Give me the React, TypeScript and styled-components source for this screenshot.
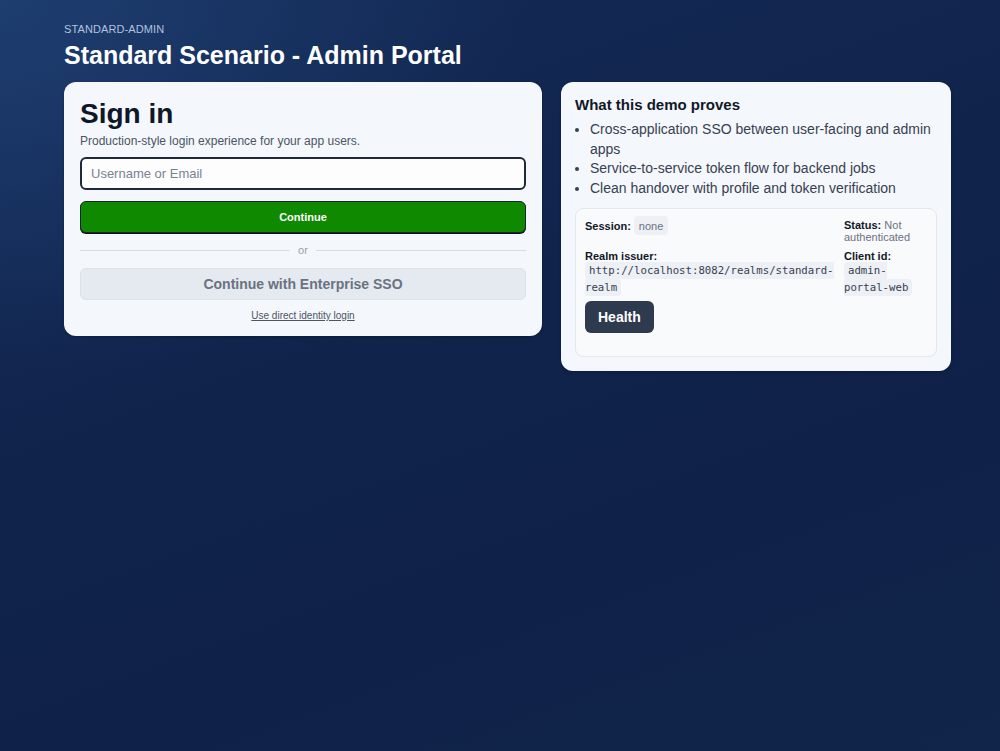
import React from "react";
import styled, { createGlobalStyle } from "styled-components";

const GlobalStyle = createGlobalStyle`
  html, body, #root { height: 100%; }
  body {
    margin: 0;
    font-family: "Liberation Sans", Arial, sans-serif;
    background: #0f2148;
  }
  * { box-sizing: border-box; }
`;

const Page = styled.div`
  min-height: 100vh;
  padding: 23px 49px 0 64px;
  background:
    radial-gradient(ellipse 520px 380px at 0% 0%, rgba(32, 66, 118, 0.8) 0%, rgba(32, 66, 118, 0) 100%),
    linear-gradient(160deg, #142b57 0%, #10234b 45%, #0f2148 70%, #112449 100%);
`;

const Eyebrow = styled.div`
  font-size: 11px;
  line-height: 13px;
  color: #b3c2de;
  letter-spacing: 0.1px;
`;

const Title = styled.h1`
  margin: 5px 0 12px;
  font-size: 25px;
  line-height: 29px;
  font-weight: 700;
  color: #ffffff;
`;

const Columns = styled.div`
  display: grid;
  grid-template-columns: 478px 390px;
  column-gap: 19px;
  align-items: start;
`;

const Card = styled.section<{ $pad: string }>`
  background: #f4f7fb;
  border-radius: 12px;
  padding: ${(p) => p.$pad};
  box-shadow: 0 1px 3px rgba(0, 0, 0, 0.25);
`;

const SignInTitle = styled.h2`
  margin: 0;
  font-size: 28px;
  line-height: 32px;
  font-weight: 700;
  color: #0f172a;
`;

const Subtitle = styled.p`
  margin: 4px 0 9px;
  font-size: 12px;
  line-height: 14px;
  color: #4b5563;
`;

const Form = styled.div`
  display: flex;
  flex-direction: column;
  gap: 11px;
`;

const TextInput = styled.input`
  height: 33px;
  width: 100%;
  border: 2px solid #1f2937;
  border-radius: 6px;
  background: #fdfdfe;
  padding: 0 9px;
  font-family: "Liberation Sans", Arial, sans-serif;
  font-size: 13px;
  color: #111827;
  outline: none;
  &::placeholder { color: #7b8290; }
`;

const PrimaryButton = styled.button`
  height: 32px;
  width: 100%;
  border: 1px solid #1b2430;
  border-radius: 6px;
  background: #0e8900;
  box-shadow: 0 1px 0 #111;
  color: #ffffff;
  font-family: "Liberation Sans", Arial, sans-serif;
  font-size: 11px;
  font-weight: 700;
  cursor: pointer;
`;

const Divider = styled.div`
  display: flex;
  align-items: center;
  gap: 8px;
  font-size: 11px;
  line-height: 13px;
  color: #9aa1ad;
  &::before, &::after {
    content: "";
    flex: 1;
    height: 1px;
    background: #d8dde5;
  }
`;

const SecondaryButton = styled.button`
  height: 32px;
  width: 100%;
  border: 1px solid #dce1e9;
  border-radius: 6px;
  background: #e5e9f0;
  color: #6b7280;
  font-family: "Liberation Sans", Arial, sans-serif;
  font-size: 14px;
  font-weight: 700;
  cursor: pointer;
`;

const LinkRow = styled.div`
  text-align: center;
  font-size: 10px;
  line-height: 12px;
  margin-top: -1px;
`;

const TextLink = styled.a`
  font-size: 10px;
  line-height: 12px;
  color: #4b5563;
  text-decoration: underline;
  cursor: pointer;
`;

const SideTitle = styled.h3`
  margin: 0;
  font-size: 15px;
  line-height: 17px;
  font-weight: 700;
  color: #111827;
`;

const List = styled.ul`
  margin: 7px 0 10px;
  padding-left: 15px;
  font-size: 14px;
  line-height: 19.6px;
  color: #374151;
`;

const InfoBox = styled.div`
  background: #f9fafc;
  border: 1px solid #e4e8ee;
  border-radius: 8px;
  padding: 7px 9px 23px;
`;

const InfoGrid = styled.div`
  display: grid;
  grid-template-columns: 253px 82px;
  column-gap: 6px;
  row-gap: 7px;
  margin-bottom: 5px;
`;

const InfoCell = styled.div<{ $offset?: number }>`
  padding-top: ${(p) => p.$offset ?? 0}px;
  font-size: 11px;
  line-height: 12px;
  color: #6b7280;
`;

const Label = styled.strong<{ $block?: boolean }>`
  display: ${(p) => (p.$block ? "block" : "inline")};
  color: #111827;
  font-weight: 700;
`;

const Pill = styled.span`
  display: inline-block;
  background: #edf0f5;
  border-radius: 4px;
  padding: 4px 5px 3px;
  line-height: 12px;
  color: #6b7280;
  margin-left: 3px;
`;

const CodeLine = styled.div`
  line-height: 16px;
`;

const Code = styled.code`
  font-family: "DejaVu Sans Mono", "Liberation Mono", monospace;
  font-size: 10.7px;
  line-height: 16px;
  color: #374151;
  background: #edf0f5;
  border-radius: 4px;
  padding: 2px 4px;
`;

const DarkButton = styled.button`
  height: 32px;
  padding: 0 13px;
  border: none;
  border-radius: 6px;
  background: #2e3a4e;
  color: #ffffff;
  font-family: "Liberation Sans", Arial, sans-serif;
  font-size: 14px;
  font-weight: 700;
  cursor: pointer;
`;

export default function App() {
  return (
    <>
      <GlobalStyle />
      <Page>
        <Eyebrow>STANDARD-ADMIN</Eyebrow>
        <Title>Standard Scenario - Admin Portal</Title>
        <Columns>
          <Card $pad="16px 16px 14px">
            <SignInTitle>Sign in</SignInTitle>
            <Subtitle>Production-style login experience for your app users.</Subtitle>
            <Form>
              <TextInput placeholder="Username or Email" />
              <PrimaryButton>Continue</PrimaryButton>
              <Divider>or</Divider>
              <SecondaryButton>Continue with Enterprise SSO</SecondaryButton>
              <LinkRow>
                <TextLink>Use direct identity login</TextLink>
              </LinkRow>
            </Form>
          </Card>
          <Card $pad="14px">
            <SideTitle>What this demo proves</SideTitle>
            <List>
              <li>Cross-application SSO between user-facing and admin apps</li>
              <li>Service-to-service token flow for backend jobs</li>
              <li>Clean handover with profile and token verification</li>
            </List>
            <InfoBox>
              <InfoGrid>
                <InfoCell>
                  <Label>Session:</Label>
                  <Pill>none</Pill>
                </InfoCell>
                <InfoCell $offset={3}>
                  <Label>Status:</Label> Not authenticated
                </InfoCell>
                <InfoCell>
                  <Label $block>Realm issuer:</Label>
                  <CodeLine>
                    <Code>http://localhost:8082/realms/standard-realm</Code>
                  </CodeLine>
                </InfoCell>
                <InfoCell>
                  <Label $block>Client id:</Label>
                  <CodeLine>
                    <Code>admin-portal-web</Code>
                  </CodeLine>
                </InfoCell>
              </InfoGrid>
              <DarkButton>Health</DarkButton>
            </InfoBox>
          </Card>
        </Columns>
      </Page>
    </>
  );
}
